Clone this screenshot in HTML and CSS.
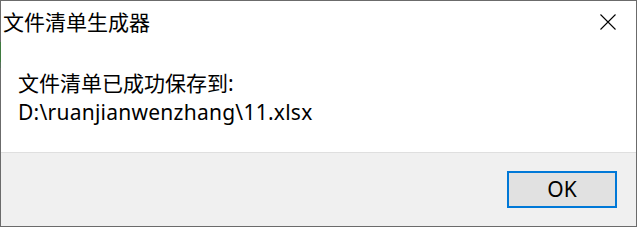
FILE: index.html
```html
<!DOCTYPE html>
<html lang="zh-CN">
<head>
<meta charset="utf-8">
<title>文件清单生成器</title>
<link rel="stylesheet" href="styles.css">
</head>
<body>
<div class="window">
  <div class="inner">
    <div class="titlebar">
      <span class="title">文件清单生成器</span>
      <span class="close" aria-label="关闭">
        <svg width="16" height="16" viewBox="0 0 16 16"><path d="M0.5 0.5 L15.5 15.5 M15.5 0.5 L0.5 15.5" stroke="#000" stroke-width="1.1" fill="none"/></svg>
      </span>
    </div>
    <div class="content">
      <p class="line">文件清单已成功保存到:</p>
      <p class="line path">D:\ruanjianwenzhang\11.xlsx</p>
    </div>
    <div class="footer">
      <button class="ok">OK</button>
    </div>
  </div>
</div>
</body>
</html>
```

FILE: styles.css
```css
html, body {
  margin: 0;
  padding: 0;
  background: #ffffff;
}
body {
  width: 637px;
  height: 227px;
  overflow: hidden;
  font-family: "Noto Sans", "Noto Sans CJK SC", sans-serif;
  color: #000;
}
.window {
  box-sizing: border-box;
  width: 637px;
  height: 227px;
  border-top: 1px solid #6b6b6b;
  border-right: 1px solid #6b6b6b;
  border-bottom: 1px solid #6b6b6b;
  padding-left: 1px;
  background: linear-gradient(to bottom, #6b6b6b 0, #6b6b6b 41px, #3f7a3f 41px, #3f7a3f 61px, #56705a 61px, #56705a 67px, #6b6b6b 67px) no-repeat;
  background-size: 1px 100%;
}
.inner {
  height: 100%;
  display: flex;
  flex-direction: column;
  background: #ffffff;
}
.titlebar {
  height: 42px;
  display: flex;
  align-items: center;
  justify-content: space-between;
  padding-left: 2px;
}
.title {
  font-family: "Noto Sans CJK SC", sans-serif;
  font-size: 21px;
  line-height: 1;
  margin-top: -1px;
}
.close {
  display: flex;
  margin-right: 20px;
}
.content {
  flex: 1;
  padding: 26px 0 0 17px;
}
.line {
  margin: 0;
  font-size: 21px;
  line-height: 29px;
  white-space: nowrap;
}
.path {
  letter-spacing: 0.25px;
}
.footer {
  height: 73px;
  border-top: 1px solid #dfdfdf;
  background: #f0f0f0;
  display: flex;
  align-items: center;
  justify-content: flex-end;
  padding-right: 19px;
}
.ok {
  box-sizing: border-box;
  width: 110px;
  height: 37px;
  border: 2px solid #0078d7;
  background: #e1e1e1;
  font-family: "Noto Sans", sans-serif;
  font-size: 21px;
  color: #000;
  padding: 0;
  line-height: 1;
}
```
